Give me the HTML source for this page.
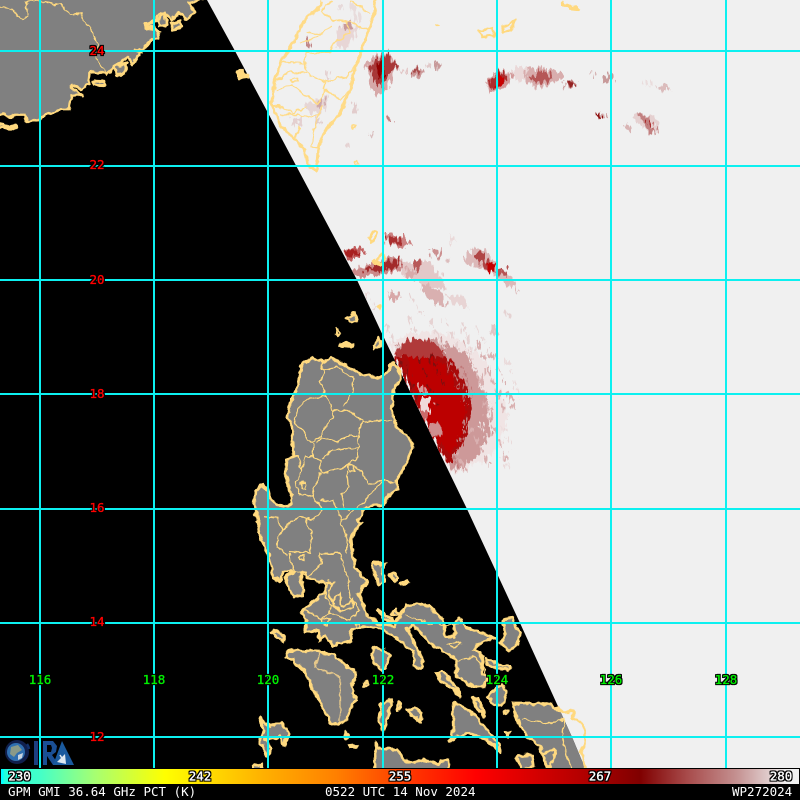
<!DOCTYPE html>
<html><head><meta charset="utf-8"><style>
html,body{margin:0;padding:0;background:#000;width:800px;height:800px;overflow:hidden}
svg{display:block;position:absolute;left:0;top:0}
text{font-family:"DejaVu Sans Mono","Liberation Mono",monospace;font-size:12.5px}
.o{stroke-width:.35px}
</style></head><body>
<svg width="800" height="800" viewBox="0 0 800 800" xmlns="http://www.w3.org/2000/svg">
<defs>
<filter id="lab" x="-20%" y="-30%" width="140%" height="160%" color-interpolation-filters="sRGB">
<feMorphology in="SourceAlpha" operator="dilate" radius="1" result="d"/>
<feFlood flood-color="#000"/><feComposite in2="d" operator="in" result="b"/>
<feMerge><feMergeNode in="b"/><feMergeNode in="SourceGraphic"/></feMerge>
</filter>
<filter id="wig" filterUnits="userSpaceOnUse" x="0" y="0" width="800" height="800" color-interpolation-filters="sRGB">
<feTurbulence type="fractalNoise" baseFrequency=".14" numOctaves="2" seed="7" result="n"/>
<feDisplacementMap in="SourceGraphic" in2="n" scale="6" xChannelSelector="R" yChannelSelector="G"/>
</filter>
<filter id="rag" filterUnits="userSpaceOnUse" x="0" y="0" width="800" height="800" color-interpolation-filters="sRGB">
<feTurbulence type="fractalNoise" baseFrequency=".32 .1" numOctaves="2" seed="3" result="n"/>
<feDisplacementMap in="SourceGraphic" in2="n" scale="13" xChannelSelector="R" yChannelSelector="G"/>
</filter>
<clipPath id="sw"><path d="M0,0H207L235,51L357,280L385,340L467,509L520,623L572,737L585,768H0Z"/></clipPath>
<clipPath id="rt"><path d="M207,0L235,51L357,280L385,340L467,509L520,623L572,737L585,768H800V0Z"/></clipPath>
<linearGradient id="cb" x1="0" x2="800" gradientUnits="userSpaceOnUse" y1="0" y2="0">
<stop offset="0" stop-color="#00ffff"/><stop offset=".004" stop-color="#00ffff"/><stop offset=".005" stop-color="#22ffdd"/>
<stop offset=".05" stop-color="#44ffc8"/><stop offset=".12" stop-color="#a8ff70"/><stop offset=".206" stop-color="#ffff00"/>
<stop offset=".33" stop-color="#ffb000"/><stop offset=".42" stop-color="#ff8000"/><stop offset=".5" stop-color="#ff4000"/>
<stop offset=".595" stop-color="#ff0000"/><stop offset=".72" stop-color="#b80000"/><stop offset=".8" stop-color="#800000"/>
<stop offset=".86" stop-color="#a84c4c"/><stop offset=".92" stop-color="#c49090"/><stop offset=".985" stop-color="#f0f0f0"/><stop offset="1" stop-color="#f0f0f0"/>
</linearGradient>
<g id="china" transform="scale(.3333)">
<path d="M-20,-20H625L590,5L565,10L585,35L560,60L535,40L515,60L495,40L480,55L465,65L430,75L460,85L480,95L470,115L450,125L430,150L405,150L420,160L395,195L385,170L360,190L335,205L320,225L290,215L270,215L265,250L245,265L215,255L215,265L250,285L215,290L205,330L165,330L130,350L85,370L70,345L45,345L30,350L5,345L-20,345Z"/>
<path d="M280,243L312,245L315,257L285,256Z"/><path d="M512,72L540,62L545,80L520,88Z"/><path d="M430,72L460,70L462,85L435,82Z"/><path d="M-20,370L20,378L50,378L45,385L-20,384Z"/>
<path d="M470,50L495,35L498,75L480,80Z"/><path d="M345,200L380,190L375,225L350,228Z"/>
</g>
<g id="lu3" transform="translate(250,340) scale(.3333)">
<path d="M155,75L190,55L215,65L245,55L280,75L330,100L385,115L415,95L425,72L445,85L455,115L430,150L425,210L440,265L470,285L490,315L470,370L440,420L440,450L410,470L400,495L350,500L320,540L335,550L315,570L300,600L315,680L350,725L325,760L355,830L385,850L435,860L448,825L470,795L500,790L540,800L580,840L585,890L615,890L610,855L625,835L650,862L735,895L700,900L670,930L700,950L695,1000L715,1010L700,1045L670,1040L620,1010L620,960L590,940L540,910L490,855L470,865L490,900L520,965L510,985L490,975L490,935L440,895L395,865L350,858L305,870L300,905L250,915L225,890L210,900L205,870L165,880L170,840L155,820L165,805L220,760L228,740L215,725L170,715L165,695L150,700L160,765L135,775L120,755L105,715L130,695L100,695L90,720L70,710L55,640L35,600L12,490L18,450L40,435L50,445L65,480L85,495L115,500L125,470L105,400L110,360L130,350L125,260L115,235L120,190L140,150Z"/>
<path d="M272,15Q290,5 310,15Q290,22 272,15Z"/><path d="M375,20L390,0L395,10L380,22Z"/>
</g>
<g id="lu4" transform="translate(250,540) scale(.3333)">
<path d="M110,340L120,330L210,335L250,345L290,375L320,400L305,440L320,480L300,510L290,540L265,555L240,545L215,495L190,450L165,395L130,360L110,355Z"/>
<path d="M365,340L375,322L400,330L420,345L410,380L395,390L370,365Z"/>
<path d="M65,275L80,270L105,290L100,305L75,290Z"/>
<path d="M370,70L405,72L395,100L405,120L385,135L380,110L365,85Z"/>
<path d="M415,105L430,100L442,115L435,122Z"/><path d="M450,130L470,122L472,130L455,134Z"/>
<path d="M560,400L575,392L600,420L635,470L605,445L570,420Z"/>
<path d="M760,240L785,235L810,285L800,320L775,330L750,310L765,280Z"/>
<path d="M610,490L630,495L680,530L720,580L745,610L750,640L715,600L660,580L620,590L600,605L610,560Z"/>
<path d="M670,475L685,475L705,530L680,505Z"/>
<path d="M445,485L452,500L445,510L440,498Z"/>
<path d="M395,490L425,480L420,510L405,560L400,575L385,540Z"/>
<path d="M470,510L495,505L515,520L510,545L490,530Z"/>
<path d="M790,492L900,492L935,515L970,515L970,535L1000,550L1005,610L995,630L1005,700H900L870,620L830,590L805,540L790,510Z"/>
<path d="M375,605L385,625L440,630L475,670L520,660L560,670L595,660L600,700H375Z"/>
<path d="M800,650L845,645L850,680L815,690Z"/><path d="M880,640L915,630L910,660L890,690Z"/>
<path d="M30,535L60,560L95,550L115,580L100,620L90,590L45,595L65,625L50,650L30,600L40,570Z"/>
<path d="M10,680L35,670L35,690H10Z"/><path d="M285,575L298,590L290,592Z"/><path d="M295,618L320,615L315,623L298,623Z"/>
<circle cx="347" cy="432" r="6"/><circle cx="767" cy="515" r="6"/><path d="M765,580L782,575L775,588Z"/>
<path d="M710,355L745,375L780,380L775,390L740,385L710,370Z"/>
<path d="M735,440L760,435L770,460L755,495L735,495L715,470Z"/>
<path d="M385,210L430,240L435,250L400,235Z"/><path d="M425,225L440,205L450,225Z"/>
</g>
</defs>

<rect width="800" height="800" fill="#f0f0f0"/>
<path d="M0,0H207L235,51L357,280L385,340L467,509L520,623L572,737L585,768H0Z" fill="#000"/>

<!-- land fill -->
<g clip-path="url(#sw)"><g filter="url(#wig)" fill="#808080" stroke="none">
<use href="#china"/><use href="#lu3"/><use href="#lu4"/>
</g></g>

<!-- rain -->
<g clip-path="url(#rt)"><g filter="url(#rag)">
<g transform="translate(250,340) scale(.3333)" fill="none" stroke-linecap="butt">
<path d="M420,10L470,-20L560,-25L640,5L700,60L750,150L770,230L755,310L715,350L640,395L600,395Z" fill="#f0e4e4" stroke="none"/>
<path d="M430,15L560,-5L650,40L715,160L722,280L665,365L610,392Z" fill="#cd9999" stroke="none"/>
<g stroke="#d9b0b0" stroke-width="9">
<path d="M640,0l90,220" stroke-dasharray="20 12 34 16"/>
<path d="M680,0l90,230" stroke-dasharray="28 18 16 20"/>
<path d="M725,40l70,170" stroke-dasharray="18 22 30 14"/>
<path d="M700,180l70,180" stroke-dasharray="26 16"/>
<path d="M660,260l60,120" stroke-dasharray="20 12"/>
<path d="M615,330l30,65" stroke-dasharray="18 10"/>
</g>
<g stroke="#f0e6e6" stroke-width="8">
<path d="M650,30l80,200" stroke-dasharray="22 30 20 40"/>
<path d="M700,130l45,120" stroke-dasharray="20 26"/>
<path d="M690,250l40,90" stroke-dasharray="24 20"/>
</g>
<g stroke="#eadada" stroke-width="7">
<path d="M770,60l25,60" stroke-dasharray="16 18"/>
<path d="M790,120l20,50" stroke-dasharray="14 12"/>
<path d="M760,260l25,70" stroke-dasharray="16 20"/>
<path d="M755,345l20,40" stroke-dasharray="18 12"/>
</g>
<path d="M435,35L490,8L560,24L615,72L662,170L666,220L640,300L600,372L580,350L500,200L440,60Z" fill="#a80a0a" stroke="none"/>
<path d="M470,40L540,40L600,100L650,190L640,270L600,340L560,300L520,230L480,120Z" fill="#bc0000" stroke="none"/>
<g stroke="#c07878" stroke-width="6">
<path d="M570,5l80,190" stroke-dasharray="18 16"/><path d="M630,70l40,100" stroke-dasharray="14 12"/>
<path d="M650,240l-30,90" stroke-dasharray="14 14"/>
<path d="M610,350l20,40" stroke-dasharray="12 8"/>
</g>
<g stroke="#7c1010" stroke-width="6">
<path d="M450,60l60,140" stroke-dasharray="20 16"/><path d="M500,45l60,150" stroke-dasharray="24 26"/>
<path d="M545,50l40,100" stroke-dasharray="20 20"/>
<path d="M530,20l30,60" stroke-dasharray="14 10"/>
</g>
<ellipse cx="526" cy="195" rx="20" ry="26" fill="#f0dada"/>
<ellipse cx="516" cy="146" rx="10" ry="14" fill="#d89898"/>
<ellipse cx="555" cy="268" rx="18" ry="22" fill="#cf8f8f"/>
<ellipse cx="522" cy="228" rx="12" ry="14" fill="#cc6a6a"/>
</g>

<!-- Taiwan east rain -->
<g transform="translate(250,0) scale(.3333)" stroke="none">
<path d="M345,190L380,165L410,155L445,200L420,245L420,270L375,285L360,250Z" fill="#d6a8a8"/>
<path d="M360,200L385,175L410,160L440,200L410,230L395,270L365,230Z" fill="#a83838"/>
<path d="M375,205L395,180L405,195L400,230L385,235Z" fill="#900000"/>
<path d="M445,200L470,215L455,222Z" fill="#e3c8c8"/>
<path d="M480,225L500,195L520,215L505,238Z" fill="#cc9999"/><path d="M490,215L500,200L508,215L498,225Z" fill="#a84a4a"/>
<path d="M530,190L545,185L548,200L535,205Z" fill="#e0c8c8"/><path d="M553,192L568,185L570,205L560,208Z" fill="#c89a9a"/>
<path d="M410,362L420,350L426,368L415,375Z" fill="#c28080"/>
<path d="M305,310L315,305L320,335L310,340Z" fill="#e2cccc"/><path d="M358,395L365,400L368,412L362,410Z" fill="#d9bcbc"/><path d="M290,425L298,425L300,442L294,440Z" fill="#e5d2d2"/>
<path d="M270,75L295,58L325,85L310,115L290,145L265,145L255,105Z" fill="#e8d6d6"/>
<path d="M275,70L300,62L312,85L290,90Z" fill="#c89a9a"/>
<path d="M165,125L178,120L175,145L168,143Z" fill="#c28888"/><path d="M225,215L240,212L242,240L228,240Z" fill="#e5d2d2"/>
<path d="M170,310L230,290L232,320L205,345L170,330Z" fill="#e6d6d6"/><path d="M205,300L220,285L225,310L210,330Z" fill="#cfa8a8"/>
<path d="M125,355L155,355L150,375L128,378Z" fill="#e4d0d0"/><path d="M198,355L210,350L210,372L200,370Z" fill="#e0cccc"/>
<path d="M265,15L280,15L280,32L268,30Z" fill="#e7dada"/><path d="M305,10L322,20L330,70L320,72L305,30Z" fill="#e8dcdc"/>
</g>

<!-- East clusters -->
<g transform="translate(470,50) scale(.3333)" stroke="none">
<path d="M50,90L90,60L130,70L110,110L60,130Z" fill="#d39a9a"/>
<path d="M58,92L90,65L122,75L100,100L65,122Z" fill="#ab2d2d"/><path d="M85,72L105,85L95,105L75,110Z" fill="#c80000"/>
<path d="M125,60L155,48L185,60L190,80L145,95L130,80Z" fill="#ead8d8"/>
<path d="M165,60L190,55L230,55L270,65L280,85L210,112L190,112L165,90Z" fill="#d8adad"/>
<path d="M175,85L205,65L230,60L245,90L200,100Z" fill="#b55656"/>
<path d="M280,100L305,88L318,100L290,118Z" fill="#c28080"/><path d="M285,98L305,94L310,104L290,110Z" fill="#942222"/>
<path d="M360,68L368,68L375,85L367,86Z" fill="#d7b5b5"/>
<path d="M397,80L425,72L435,90L405,95Z" fill="#c89a9a"/>
<path d="M518,92L535,92L542,106L526,108Z" fill="#eadcdc"/><path d="M560,106L598,106L600,122L568,122Z" fill="#dbbcbc"/>
<path d="M380,192L400,186L406,204L390,208Z" fill="#d0a6a6"/><path d="M382,190L392,190L399,207L391,207Z" fill="#8f1010"/>
<path d="M490,200L530,192L565,212L562,245L545,248L510,225Z" fill="#e5d0d0"/>
<path d="M505,198L530,195L548,232L560,245L540,245L520,215Z" fill="#c28080"/><path d="M530,212L542,208L548,230L538,230Z" fill="#ab2d2d"/>
<path d="M465,228L477,225L487,242L475,242Z" fill="#d8b4b4"/>
</g>

<!-- 20N bands -->
<g transform="translate(330,220) scale(.3333)" stroke="none">
<path d="M35,95L90,75L105,95L60,125Z" fill="#c26060"/><path d="M40,98L75,85L90,100L55,112Z" fill="#a82020"/>
<path d="M60,155L130,130L185,110L215,120L215,150L150,165L70,175Z" fill="#cc8a8a"/>
<path d="M100,150L160,125L205,115L210,140L150,155Z" fill="#a22a2a"/>
<path d="M165,45L215,45L250,75L225,85L175,75Z" fill="#cc8080"/><path d="M172,58L205,48L215,75L180,72Z" fill="#aa3030"/>
<path d="M215,125L285,120L330,160L350,210L300,200L250,180L215,165Z" fill="#e3c8c8"/>
<path d="M250,120L275,125L270,155L250,145Z" fill="#b85858"/><path d="M225,140L260,155L250,175L225,165Z" fill="#d8aaaa"/>
<path d="M305,85L325,90L330,115L312,115Z" fill="#cc9090"/>
<path d="M175,215L205,220L205,240L178,240Z" fill="#d8a8a8"/>
<path d="M270,185L330,215L350,255L320,250L280,220Z" fill="#d9b0b0"/>
<path d="M350,220L410,235L420,265L370,255Z" fill="#e8d4d4"/>
<path d="M405,115L430,80L470,95L500,140L545,170L570,220L535,195L490,160L440,140L415,135Z" fill="#dcb8b8"/>
<path d="M430,100L450,92L480,130L500,155L470,150Z" fill="#b04646"/>
<path d="M470,130L490,130L495,155L478,155Z" fill="#c00000"/><path d="M505,145L525,150L530,170L510,168Z" fill="#b65454"/>
<g stroke="#e6d2d2" stroke-width="7" fill="none">
<path d="M170,320l40,90" stroke-dasharray="18 14"/><path d="M235,290l50,110" stroke-dasharray="20 16"/><path d="M300,300l45,95" stroke-dasharray="22 12"/>
<path d="M345,300l40,90" stroke-dasharray="20 18"/><path d="M395,315l40,85" stroke-dasharray="20 14"/><path d="M440,320l40,85" stroke-dasharray="16 20"/>
<path d="M115,220l20,50" stroke-dasharray="14 10"/><path d="M240,225l40,70" stroke-dasharray="16 14"/>
</g>
<path d="M200,388L235,358L290,358L340,390V410H200Z" fill="#b03a3a"/>
<path d="M480,315L495,318L498,340L484,338Z" fill="#e0c4c4"/><path d="M525,275L538,275L540,295L530,292Z" fill="#e5d2d2"/>
<path d="M360,45L372,50L375,68L365,65Z" fill="#ead9d9"/><path d="M348,110L358,112L358,130L350,128Z" fill="#dcbcbc"/>
</g>
</g></g>

<!-- coast/outline and internal lines -->
<g filter="url(#wig)">
<g fill="none" stroke="#ffd97f" stroke-width="8.5" stroke-linejoin="round">
<use href="#china"/><use href="#lu3"/><use href="#lu4"/>
</g>
<g fill="none" stroke="#ffd97f">
<g transform="scale(.3333)" stroke-width="3.5">
<path d="M-10,20L30,25L70,60L85,50L78,5L105,3L150,10L185,15L210,45L245,40L250,65L275,90L290,130L290,175L310,210L320,225"/>
</g>
<g transform="translate(250,340) scale(.3333)" stroke-width="4">
<path d="M215,65L220,100L212,125L225,160L218,170L175,175L145,205L135,245L150,265L175,300L190,305L215,290L222,265L248,235L245,195L225,165"/>
<path d="M220,90L260,80L310,115L305,160L280,200"/><path d="M248,215L298,210L340,245L425,240"/>
<path d="M340,245L325,290L325,350L285,380L215,400L210,365L190,350L165,350L155,395L138,425L145,460L185,470L210,400"/>
<path d="M215,295L260,305L300,285L325,290"/><path d="M190,310L190,350M200,310L215,295"/>
<path d="M130,350L145,350L155,390"/><path d="M215,360L240,335L325,320"/>
<path d="M285,380L295,370L335,395L355,435L400,420L435,430"/><path d="M290,395L295,440L275,465L285,500L300,510"/>
<path d="M185,470L210,490L215,510L190,540L165,535L150,530L125,545L100,570L85,590L80,620L115,650"/>
<path d="M210,480L250,485L265,520L290,590L290,640"/><path d="M400,420L340,490L275,540"/><path d="M45,530L80,535L100,570"/>
<path d="M165,535L185,575L180,640L120,635"/><path d="M150,430L165,430L168,445L155,445Z"/>
<path d="M295,375L310,380L315,395L298,393Z"/>
</g>
<g transform="translate(250,540) scale(.3333)" stroke-width="4">
<path d="M120,40L130,90L175,110L215,70L205,40L270,40L290,100L300,170L330,210L300,240L240,220L215,235L160,210"/>
<path d="M145,50L165,47L165,60L150,58Z"/>
<path d="M235,120L225,165L245,195L235,220"/><path d="M215,235L235,240L235,255L215,250Z"/>
<path d="M255,170L270,160L272,200L290,195L310,180L305,205L270,215L250,195Z" stroke-width="6"/>
<path d="M225,130L250,130L235,165L255,190" stroke-width="5"/>
<path d="M465,225L540,250L580,255L640,250"/><path d="M595,315L615,305L635,312L615,322Z"/>
<path d="M620,365L670,350L700,380L710,410"/><path d="M210,340L190,380L270,410L270,545" stroke="#e8c98a"/>
<path d="M815,535L880,550L945,540L935,590L965,690"/><path d="M315,255L330,250L335,265L320,268Z"/>
</g>
</g>
<!-- Taiwan -->
<g transform="translate(250,0) scale(.3333)" fill="none" stroke="#ffdb87" stroke-linejoin="round">
<path stroke-width="9" d="M215,0L205,30L170,50L130,125L95,185L75,240L65,310L90,370L130,415L165,450L175,500L200,510L205,440L230,385L270,340L300,270L320,190L350,110L370,50L378,0"/>
<path stroke-width="4.5" d="M225,15L215,35L250,60L300,65L360,95M170,95L210,105L250,75M225,15L250,5M300,5L330,20L360,40M150,130L205,110M285,60L300,95L250,130L240,155L165,160L170,220L225,245L290,230L320,190M95,185L165,190M75,240L125,215L170,220M120,240L140,235L145,245L125,247ZM80,270L125,255L165,285L205,310L225,270L270,300L300,270M65,310L130,340L170,320M90,345L140,345L205,350L215,320M205,345L190,400L185,440L205,440M130,415L150,380M225,245L220,270"/>
<ellipse cx="310" cy="383" rx="6" ry="4" stroke-width="5"/><path d="M312,484L324,482L326,494L314,492Z" stroke-width="5"/><ellipse cx="566" cy="75" rx="8" ry="3.5" fill="#ffd97f" stroke="none"/>
</g>
<!-- small islands east/north -->
<g fill="none" stroke="#ffd97f" stroke-width="2.4" stroke-linejoin="round">
<path d="M479,31L492,28L494,36L482,37Z"/><path d="M502,26L508,26L515,19L512,30L504,32Z"/><path d="M563,2L568,6L578,8L580,10L570,9L563,5Z"/>
<path d="M237,72L243,70L248,78L240,78Z" fill="#ffd97f"/>
<ellipse cx="373" cy="237" rx="2.5" ry="5" transform="rotate(20 373 237)"/>
<path d="M376,262L382,253L385,258L380,265Z"/><circle cx="375" cy="262" r="1.5"/>
<path d="M378,306L381,305L381,309Z"/>
<path d="M347,317L355,314L357,322L350,322Z" fill="#808080"/><path d="M337,328L340,333L339,337L336,334Z"/><path d="M341,344L353,344L350,347L342,346Z"/><path d="M374,345L379,337L381,345L375,349Z" fill="#808080"/>
</g>
</g>

<!-- Grid -->
<g stroke="#0cf0f0" stroke-width="2" fill="none">
<path d="M0,51H800M0,166H800M0,280H800M0,394H800M0,509H800M0,623H800M0,737H800"/>
<path d="M40,0V768M154,0V768M268,0V768M383,0V768M497,0V768M611,0V768M726,0V768"/>
</g>

<!-- Labels -->
<g fill="#ff0000" stroke="#ff0000" text-anchor="middle" class="o" filter="url(#lab)">
<text x="97" y="55">24</text><text x="97" y="169">22</text><text x="97" y="284">20</text><text x="97" y="398">18</text><text x="97" y="512">16</text><text x="97" y="626">14</text><text x="97" y="741">12</text>
</g>
<g fill="#00f000" stroke="#00f000" text-anchor="middle" class="o" filter="url(#lab)">
<text x="40" y="684">116</text><text x="154" y="684">118</text><text x="268" y="684">120</text><text x="383" y="684">122</text><text x="497" y="684">124</text><text x="611" y="684">126</text><text x="726" y="684">128</text>
</g>

<!-- CIRA logo -->
<g>
<circle cx="17" cy="752" r="12" fill="#101f4c"/>
<circle cx="16" cy="752" r="9" fill="#2f6fb0"/>
<path d="M11,747L18,745L22,750L17,753L14,757L10,754Z" fill="#8a9a88"/><path d="M18,755L23,753L22,758L18,760Z" fill="#c9d4df"/>
<path d="M27,744A12,12 0 0 1 29,749" stroke="#12306a" stroke-width="2.5" fill="none"/>
<rect x="34" y="741" width="4" height="24" fill="#1d3f80"/>
<path d="M43,741H53L57,746L56,752L52,755L59,765H53L47,756V765H43ZM47,745V752H51L52,748L51,745Z" fill="#1a4f95"/>
<path d="M62,741L74,765H53Z" fill="#1a5a9e"/>
<path d="M57,762L65,754L66,764Z" fill="#dfe8f0"/><path d="M60,755L63,760" stroke="#dfe8f0" stroke-width="1.5"/>
</g>

<!-- Colorbar -->
<rect x="0" y="768" width="800" height="32" fill="#000"/>
<rect x="1" y="769" width="798" height="15" fill="url(#cb)"/>
<g fill="#fff" stroke="#fff" text-anchor="middle" class="o" filter="url(#lab)">
<text x="19.5" y="780.5">230</text><text x="200" y="780.5">242</text><text x="400" y="780.5">255</text><text x="600" y="780.5">267</text><text x="781" y="780.5">280</text>
</g>
<g fill="#fff">
<text x="8" y="796">GPM GMI 36.64 GHz PCT (K)</text>
<text x="325" y="796">0522 UTC 14 Nov 2024</text>
<text x="732" y="796">WP272024</text>
</g>
</svg>
</body></html>
